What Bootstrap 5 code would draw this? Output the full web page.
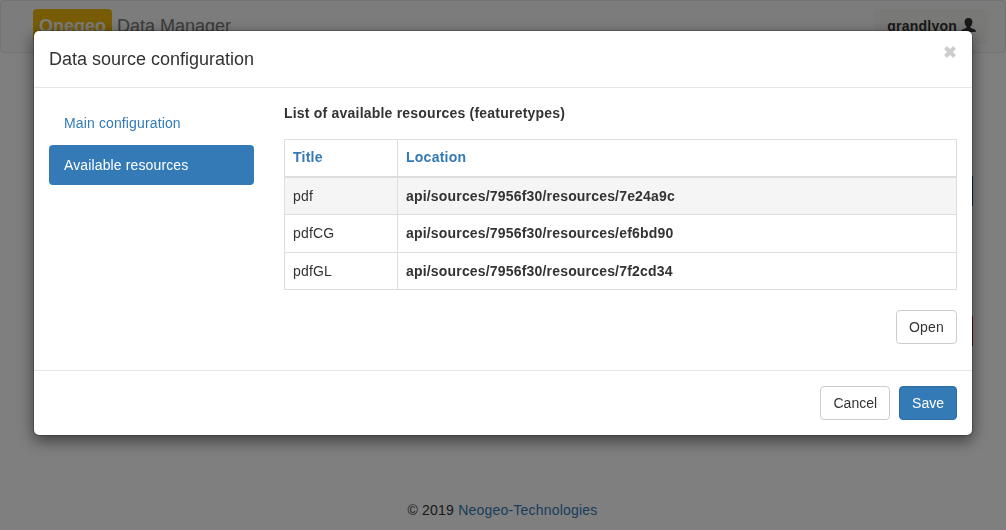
<!DOCTYPE html>
<html lang="en">
<head>
<meta charset="utf-8">
<meta name="viewport" content="width=device-width, initial-scale=1">
<title>Onegeo Data Manager</title>
<link href="https://cdn.jsdelivr.net/npm/bootstrap@5.3.0/dist/css/bootstrap.min.css" rel="stylesheet">
<style>
  body { font: 14px/20px "Liberation Sans", Arial, sans-serif; color: #333; height: 530px; overflow: hidden; }
  a { color: #337ab7; text-decoration: none; }
  .topbar { height: 53px; padding: 8px 17px 0 32px; background: #f8f8f8; border: 1px solid #e7e7e7; border-radius: 4px; }
  .brand { font-size: 18px; line-height: 18px; color: #777; }
  .brand-tag { display: inline-block; background: #f0b90b; color: #f8f8f8; font-weight: 700; padding: 8px 6px; border-radius: 4px; }
  .account { height: 35px; padding: 7px 12px 0 13px; background: #f3f2ef; border-radius: 4px; color: #333; font-weight: 700; letter-spacing: .24px; gap: 4px; }
  .account svg { margin-top: 1px; }
  .page-panel { width: 940px; }
  .edge-btn { width: 60px; height: 30px; }
  .modal { --bs-modal-width: 940px; --bs-modal-margin: 30px; overflow: hidden; }
  .modal-dialog { margin: 30px auto; max-width: 940px; }
  .modal-content { color: #333; border: 1px solid rgba(0,0,0,.2); border-radius: 6px; box-shadow: 0 5px 15px rgba(0,0,0,.5); }
  .modal-header { height: 57px; padding: 15px; border-bottom: 1px solid #e5e5e5; }
  .modal-title { font-size: 18px; line-height: 26px; font-weight: 400; }
  .dismiss { width: 14px; height: 14px; padding: 0; margin: -1px 0 0; border: 0; background: none; color: #ccc; display: flex; align-items: center; }
  .modal-body { height: 282px; padding: 15px; }
  .nav-pills { gap: 2px; letter-spacing: .13px; }
  .nav-pills .nav-link { padding: 10px 15px; border-radius: 4px; color: #337ab7; }
  .nav-pills .nav-link.active { background: #337ab7; color: #fff; }
  .side { width: 205px; margin-right: 30px; flex: none; }
  .list-title { letter-spacing: .21px; }
  .resources { margin: 16px 0 20px; color: #333; border-color: #ddd; table-layout: fixed; --bs-table-color: #333; letter-spacing: .18px; }
  .resources > :not(caption) > * > * { padding: 8px; border: 1px solid #ddd; color: #333; line-height: 20px; box-shadow: none; }
  .resources > thead > tr > th { padding: 7px 8px 9px; border-bottom: 2px solid #ddd; color: #337ab7; letter-spacing: .25px; }
  .resources tr { height: 37.5px; }
  .resources tr.hovered > td { background: #f5f5f5; }
  .btn { font-size: 14px; line-height: 20px; padding: 6px 12px; border-radius: 4px; }
  .btn-plain { background: #fff; color: #333; border-color: #ccc; }
  .btn-open { letter-spacing: .2px; }
  .btn-save { background: #337ab7; color: #fff; border-color: #2e6da4; }
  .modal-footer { height: 65px; padding: 15px; gap: 9px; border-top: 1px solid #e5e5e5; }
  .modal-footer > * { margin: 0; }
  .modal-backdrop { --bs-backdrop-opacity: .5; }
  .site-footer { padding: 0 1px 10px 0; letter-spacing: .21px; }
</style>
</head>
<body>
<div class="d-flex flex-column h-100">
  <nav class="topbar d-flex justify-content-between align-items-start">
    <div class="brand"><span class="brand-tag">Onegeo</span> Data Manager</div>
    <a class="account d-flex" href="#">grandlyon
      <svg width="15" height="16" viewBox="0 0 15 16" fill="currentColor" aria-hidden="true"><path d="M7.500 1c2.500 0 3.900 1.500 3.900 4 0 1.700-.6 3.300-1.700 4.300-.5.600-.4 1.400.4 1.700l3.500 1.500c.9.400 1.200 1 1.200 1.700V15H.2v-.8c0-.7.4-1.300 1.200-1.700L4.900 11c.8-.3.9-1.100.4-1.700C4.200 8.300 3.600 6.700 3.600 5c0-2.500 1.400-4 3.900-4z"/></svg>
    </a>
  </nav>
  <main class="page-panel mx-auto flex-grow-1 d-flex flex-column align-items-end">
    <div class="edge-btn" style="margin-top:123px;background:#286090"></div>
    <div class="edge-btn" style="margin-top:110px;background:#c9302c"></div>
  </main>
  <footer class="site-footer text-center">© 2019 <a href="#">Neogeo-Technologies</a></footer>
</div>

<div class="modal-backdrop show"></div>
<div class="modal d-block" tabindex="-1" role="dialog">
  <div class="modal-dialog">
    <div class="modal-content">
      <div class="modal-header align-items-start">
        <h4 class="modal-title">Data source configuration</h4>
        <button class="dismiss" type="button" aria-label="Close">
          <svg width="14" height="14" viewBox="0 0 14 14" aria-hidden="true"><path d="M2.500 2.500l9 9M11.500 2.500l-9 9" stroke="currentColor" stroke-width="4"/></svg>
        </button>
      </div>
      <div class="modal-body d-flex align-items-start">
        <div class="side nav nav-pills flex-column">
          <a class="nav-link" href="#">Main configuration</a>
          <a class="nav-link active" href="#">Available resources</a>
        </div>
        <div class="flex-grow-1">
          <div class="list-title fw-bold">List of available resources (featuretypes)</div>
          <table class="table resources">
            <colgroup><col style="width:113px"><col></colgroup>
            <thead><tr><th>Title</th><th>Location</th></tr></thead>
            <tbody>
              <tr class="hovered"><td>pdf</td><td class="fw-bold">api/sources/7956f30/resources/7e24a9c</td></tr>
              <tr><td>pdfCG</td><td class="fw-bold">api/sources/7956f30/resources/ef6bd90</td></tr>
              <tr><td>pdfGL</td><td class="fw-bold">api/sources/7956f30/resources/7f2cd34</td></tr>
            </tbody>
          </table>
          <div class="text-end"><button class="btn btn-plain btn-open" type="button">Open</button></div>
        </div>
      </div>
      <div class="modal-footer">
        <button class="btn btn-plain" type="button">Cancel</button>
        <button class="btn btn-save" type="button">Save</button>
      </div>
    </div>
  </div>
</div>
<script src="https://cdn.jsdelivr.net/npm/bootstrap@5.3.0/dist/js/bootstrap.bundle.min.js"></script>
</body>
</html>
